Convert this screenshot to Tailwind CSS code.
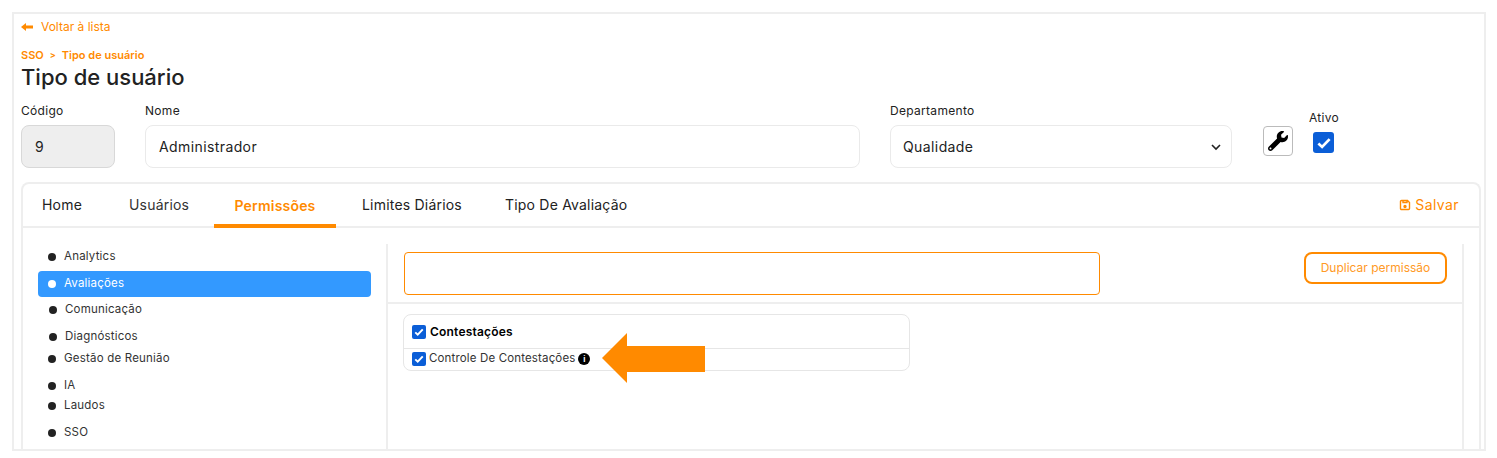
<!DOCTYPE html>
<html lang="pt-BR">
<head>
    <meta charset="UTF-8">
    <title>Tipo de usuário</title>
    <script src="https://cdn.jsdelivr.net/npm/@tailwindcss/browser@4"></script>
</head>
<body class="bg-white font-['Inter','Liberation_Sans',sans-serif] text-[#222]">
    <div class="h-[458px] overflow-hidden pt-3 pl-3 pr-[11px] pb-[7px]">
        <div class="h-[439px] overflow-hidden border-2 border-[#eeeeee] pt-[3px] pr-[3px] pl-[7px]">
            <!-- topo -->
            <div class="flex h-5 items-center gap-2 text-[12px] text-[#ff8a00]">
                <svg class="h-2.5 w-3" viewBox="0 0 12 10" fill="currentColor"><path d="M0 5 5 1v2.500h7v3H5V9z"/></svg>
                <span>Voltar à lista</span>
            </div>
            <div class="mt-[11px] flex h-[14px] items-center gap-[6px] text-[11px] font-semibold text-[#ff8a00]">
                <span>SSO</span><span class="text-[9px]">&gt;</span><span>Tipo de usuário</span>
            </div>
            <h1 class="mt-px h-[30px] text-[22px] leading-[28px] font-medium">Tipo de usuário</h1>

            <div class="mt-[9px] flex items-start">
                <div class="w-[124px]">
                    <label class="block h-[18px] text-[12px] leading-[18px] tracking-[0.3px]">Código</label>
                    <div class="mt-[5px] flex h-[43px] w-[94px] items-center rounded-lg border border-[#d8d8d8] bg-[#eeeeee] pl-[13px] text-sm">9</div>
                </div>
                <div class="w-[745px]">
                    <label class="block h-[18px] text-[12px] leading-[18px] tracking-[0.3px]">Nome</label>
                    <div class="mt-[5px] flex h-[43px] w-[715px] items-center rounded-lg border border-[#eaeaea] pl-[13px] text-sm tracking-[0.4px]">Administrador</div>
                </div>
                <div class="w-[373px]">
                    <label class="block h-[18px] text-[12px] leading-[18px] tracking-[0.3px]">Departamento</label>
                    <div class="mt-[5px] flex h-[43px] w-[342px] items-center justify-between rounded-lg border border-[#eaeaea] pr-[10px] pl-3 text-sm tracking-[0.4px]">
                        <span>Qualidade</span>
                        <svg class="h-2 w-2.5" viewBox="0 0 10 8" fill="none" stroke="#222" stroke-width="1.6"><path d="M1 2l4 4 4-4"/></svg>
                    </div>
                </div>
                <button class="mt-[24px] flex h-[30px] w-[30px] items-center justify-center rounded border border-[#bbbbbb]">
                    <svg class="h-5 w-5" viewBox="0 0 512 512" fill="#000"><path d="M507.700 109.100c-2.200-9-13.500-12.100-20.100-5.500l-74.400 74.400-67.900-11.300-11.300-67.900 74.400-74.400c6.600-6.600 3.400-17.900-5.700-20.200-47.400-11.700-99.600.9-136.600 37.900-39.600 39.600-50.600 97.100-34 147.200L18.700 402.800c-25 25-25 65.500 0 90.500s65.500 25 90.500 0l213.200-213.200c50.100 16.700 107.500 5.700 147.400-34.200 37.100-37.100 49.700-89.300 37.900-136.800zM64 472c-13.300 0-24-10.700-24-24s10.700-24 24-24 24 10.700 24 24-10.700 24-24 24z"/></svg>
                </button>
                <div class="mt-[7px] ml-4">
                    <label class="block h-[18px] text-[12px] leading-[18px] tracking-[0.3px]">Ativo</label>
                    <div class="mt-[5px] ml-1 flex h-[21px] w-[21px] items-center justify-center rounded-[3px] bg-[#0b5ed7]">
                        <svg class="h-[18px] w-[18px]" viewBox="0 0 16 16" fill="none" stroke="#fff" stroke-width="2.4"><path d="M3 8.500l3.300 3L13 4.500"/></svg>
                    </div>
                </div>
            </div>

            <!-- card com abas -->
            <div class="relative mt-[14px] h-[300px] rounded-t-lg border-2 border-b-0 border-[#eeeeee]">
                <div class="flex h-[44px] items-stretch border-b-2 border-[#eeeeee] pr-5 text-sm tracking-[0.2px]">
                    <div class="flex w-[91px] items-center pl-[19px]">Home</div>
                    <div class="flex w-[100px] items-center pl-[15px] text-[#333]">Usuários</div>
                    <div class="-mb-[2px] flex w-[122px] justify-center border-b-[4px] border-[#ff8a00] pt-[12px] font-semibold text-[#ff8a00]">Permissões</div>
                    <div class="flex w-[144px] items-center pl-[26px]">Limites Diários</div>
                    <div class="flex items-center pl-[25px]">Tipo De Avaliação</div>
                    <div class="ml-auto flex items-center gap-[4px] tracking-[0.4px] text-[#ff8a00]">
                        <svg class="h-3 w-3" viewBox="0 0 12 12" fill="none" stroke="currentColor" stroke-width="1.400"><path d="M1.500 2.500a1 1 0 0 1 1-1h6l2 2v6a1 1 0 0 1-1 1h-7a1 1 0 0 1-1-1zM4 1.500v2h4v-2"/><circle cx="6" cy="7.500" r="1" fill="currentColor"/></svg>
                        <span>Salvar</span>
                    </div>
                </div>

                <div class="flex">
                    <!-- menu lateral -->
                    <div class="w-[363px] pt-[16px] pr-[15px] pl-[15px] text-[11.5px] tracking-[0.2px] text-[#333]">
                        <div class="flex h-[26px] items-center gap-2 pl-[10px]"><span class="h-2 w-2 rounded-full bg-[#222]"></span>Analytics</div>
                        <div class="mt-px flex h-[26px] items-center gap-2 rounded bg-[#3399ff] pl-[10px] text-white"><span class="h-2 w-2 rounded-full bg-white"></span>Avaliações</div>
                        <div class="flex h-[26px] items-center gap-2 pl-[11px]"><span class="h-2 w-2 rounded-full bg-[#222]"></span>Comunicação</div>
                        <div class="mt-px flex h-[26px] items-center gap-2 pl-[11px]"><span class="h-2 w-2 rounded-full bg-[#222]"></span>Diagnósticos</div>
                        <div class="-mt-1 flex h-[26px] items-center gap-2 pl-[10px]"><span class="h-2 w-2 rounded-full bg-[#222]"></span>Gestão de Reunião</div>
                        <div class="mt-px flex h-[26px] items-center gap-2 pl-[10px]"><span class="h-2 w-2 rounded-full bg-[#222]"></span>IA</div>
                        <div class="-mt-1.5 flex h-[26px] items-center gap-2 pl-[10px]"><span class="h-2 w-2 rounded-full bg-[#222]"></span>Laudos</div>
                        <div class="mt-px flex h-[26px] items-center gap-2 pl-[10px]"><span class="h-2 w-2 rounded-full bg-[#222]"></span>SSO</div>
                    </div>

                    <!-- conteudo -->
                    <div class="mt-[16px] h-[240px] w-[1078px] border-x-2 border-[#eeeeee]">
                        <div class="flex h-[60px] items-start justify-between border-b-2 border-[#eeeeee] pt-[8px] pr-[15px] pl-4">
                            <div class="h-[43px] w-[696px] rounded border border-[#ff8a00]"></div>
                            <button class="h-[32px] w-[143px] rounded-lg border-2 border-[#ff8a00] text-[12px] text-[#ff9a26]">Duplicar permissão</button>
                        </div>
                        <div class="relative mt-[10px] ml-[15px] h-[57px] w-[507px] rounded-lg border border-[#e6e6e6]">
                            <div class="flex h-[34px] items-center gap-[4px] border-b border-[#e6e6e6] pl-2 text-[12px] tracking-[0.2px] font-semibold text-black">
                                <span class="flex h-[14px] w-[14px] items-center justify-center rounded-[2px] bg-[#0b5ed7]"><svg class="h-3 w-3" viewBox="0 0 16 16" fill="none" stroke="#fff" stroke-width="2.6"><path d="M3 8.500l3.300 3L13 4.500"/></svg></span>
                                Contestações
                            </div>
                            <div class="flex h-[21px] items-center gap-[3px] pb-[2px] pl-2 text-[11.5px] tracking-[0.15px] text-[#333]">
                                <span class="flex h-[14px] w-[14px] items-center justify-center rounded-[2px] bg-[#0b5ed7]"><svg class="h-3 w-3" viewBox="0 0 16 16" fill="none" stroke="#fff" stroke-width="2.6"><path d="M3 8.500l3.300 3L13 4.500"/></svg></span>
                                Controle De Contestações
                                <span class="flex h-3 w-3 items-center justify-center rounded-full bg-black text-[8px] leading-none font-bold text-white">i</span>
                            </div>
                        </div>
                    </div>
                </div>

                <!-- seta por cima do conteudo -->
                <svg class="absolute top-[149px] left-[577px] h-[50px] w-[105px]" viewBox="0 0 105 50" fill="#ff8a00"><path d="M2 25 27 0v13h78v26H27v11z"/></svg>
            </div>
        </div>
    </div>
</body>
</html>
